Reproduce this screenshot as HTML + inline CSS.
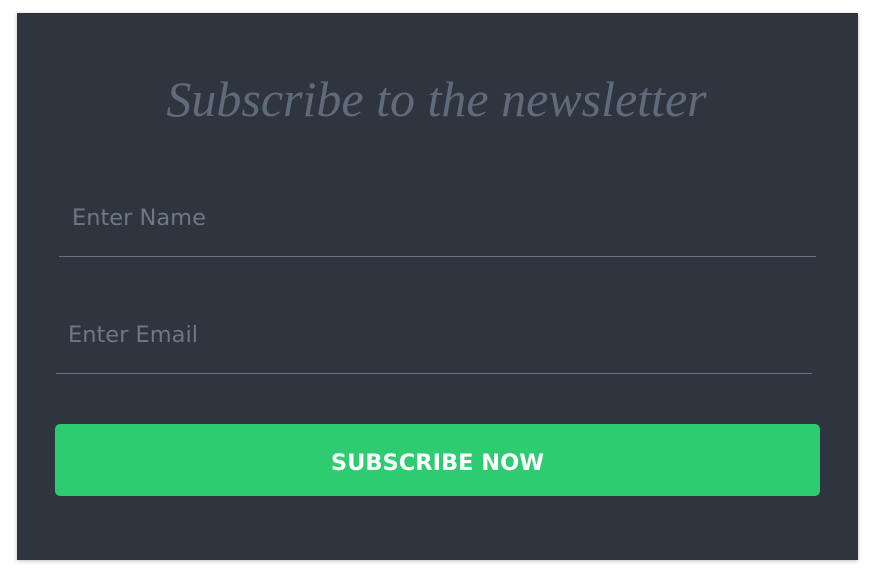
<!DOCTYPE html>
<html><head><style>
body{margin:0;background:#fff;width:873px;height:574px;position:relative;overflow:hidden;font-family:"DejaVu Sans","Liberation Sans",sans-serif}
.p{position:absolute;left:17px;top:13px;width:841px;height:547px;background:#2f353e;box-shadow:0 1px 4px rgba(0,0,0,.25)}
.t{position:absolute;left:0;width:873px;top:70px;text-align:center;font-family:"Liberation Serif",serif;font-style:italic;font-size:50px;color:#5f6b7a}
.i{position:absolute;color:#6d7886;font-size:22.5px}
.l{position:absolute;height:1px;background:#6b7480}
.b{position:absolute;left:55px;top:424px;width:765px;height:72px;background:#2ecc71;border-radius:5px;color:#fff;font-weight:bold;font-size:22.5px;text-align:center;line-height:78px}
</style></head><body>
<div class="p"></div>
<div class="t">Subscribe to the newsletter</div>
<div class="i" style="left:72px;top:205px">Enter Name</div>
<div class="l" style="left:59px;top:256px;width:757px"></div>
<div class="i" style="left:68px;top:322px">Enter Email</div>
<div class="l" style="left:56px;top:373px;width:756px"></div>
<div class="b">SUBSCRIBE NOW</div>
</body></html>
